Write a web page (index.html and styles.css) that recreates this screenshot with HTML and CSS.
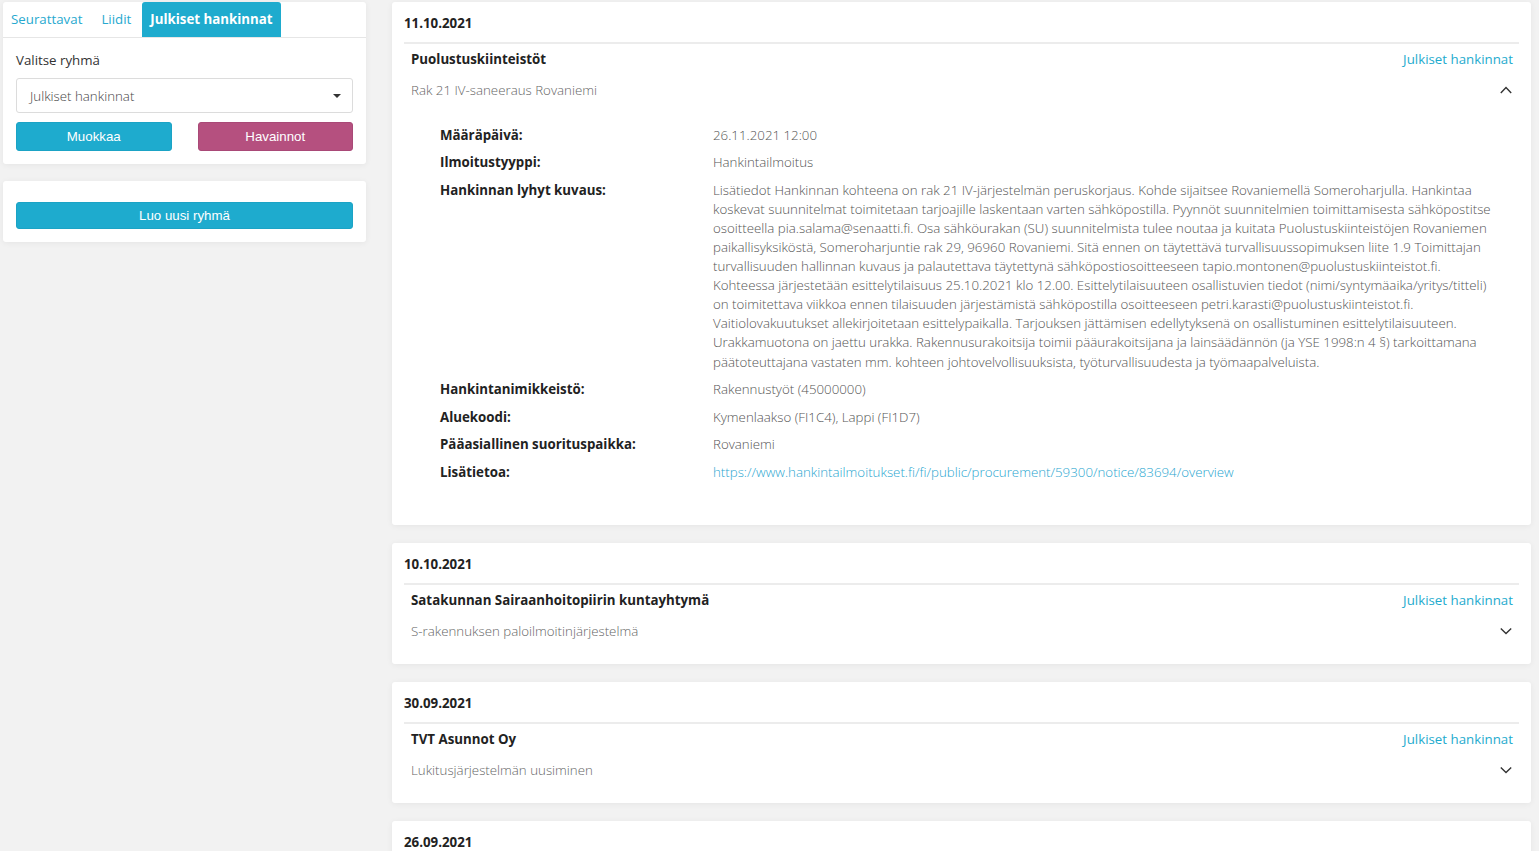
FILE: index.html
```html
<!DOCTYPE html>
<html lang="fi">
  <head>
    <meta charset="UTF-8" />
    <meta name="viewport" content="width=device-width, initial-scale=1.0" />
    <title>Julkiset hankinnat</title>
    <link rel="stylesheet" href="styles.css">
  </head>

  <body>
    <div class="page">
      <aside class="sidebar">
        <div class="side-card">
          <ul class="tabs">
            <li class="tab">Seurattavat</li>
            <li class="tab">Liidit</li>
            <li class="tab active">Julkiset hankinnat</li>
          </ul>
          <div class="side-body">
            <label class="field-label">Valitse ryhmä</label>
            <div class="select">
              <span>Julkiset hankinnat</span>
              <span class="caret"></span>
            </div>
            <div class="btn-row">
              <button class="btn btn-blue">Muokkaa</button>
              <button class="btn btn-pink">Havainnot</button>
            </div>
          </div>
        </div>

        <div class="side-card side-card-new">
          <button class="btn btn-blue btn-wide">Luo uusi ryhmä</button>
        </div>
      </aside>

      <main class="feed">
        <section class="entry-card">
          <div class="entry-date">11.10.2021</div>
          <div class="entry-head">
            <span class="entry-name">Puolustuskiinteistöt</span>
            <a class="entry-group" href="#">Julkiset hankinnat</a>
          </div>
          <div class="entry-sub">
            <span>Rak 21 IV-saneeraus Rovaniemi</span>
            <svg class="chevron" width="12" height="8" viewBox="0 0 12 8"><polyline points="0.8,7 6,1.6 11.2,7" /></svg>
          </div>
          <dl class="details">
            <dt>Määräpäivä:</dt>
            <dd>26.11.2021 12:00</dd>
            <dt>Ilmoitustyyppi:</dt>
            <dd>Hankintailmoitus</dd>
            <dt>Hankinnan lyhyt kuvaus:</dt>
            <dd>Lisätiedot Hankinnan kohteena on rak 21 IV-järjestelmän peruskorjaus. Kohde sijaitsee Rovaniemellä Someroharjulla. Hankintaa koskevat suunnitelmat toimitetaan tarjoajille laskentaan varten sähköpostilla. Pyynnöt suunnitelmien toimittamisesta sähköpostitse osoitteella pia.salama@senaatti.fi. Osa sähköurakan (SU) suunnitelmista tulee noutaa ja kuitata Puolustuskiinteistöjen Rovaniemen paikallisyksiköstä, Someroharjuntie rak 29, 96960 Rovaniemi. Sitä ennen on täytettävä turvallisuussopimuksen liite 1.9 Toimittajan turvallisuuden hallinnan kuvaus ja palautettava täytettynä sähköpostiosoitteeseen tapio.montonen@puolustuskiinteistot.fi. Kohteessa järjestetään esittelytilaisuus 25.10.2021 klo 12.00. Esittelytilaisuuteen osallistuvien tiedot (nimi/syntymäaika/yritys/titteli) on toimitettava viikkoa ennen tilaisuuden järjestämistä sähköpostilla osoitteeseen petri.karasti@puolustuskiinteistot.fi. Vaitiolovakuutukset allekirjoitetaan esittelypaikalla. Tarjouksen jättämisen edellytyksenä on osallistuminen esittelytilaisuuteen. Urakkamuotona on jaettu urakka. Rakennusurakoitsija toimii pääurakoitsijana ja lainsäädännön (ja YSE 1998:n 4 §) tarkoittamana päätoteuttajana vastaten mm. kohteen johtovelvollisuuksista, työturvallisuudesta ja työmaapalveluista.</dd>
            <dt>Hankintanimikkeistö:</dt>
            <dd>Rakennustyöt (45000000)</dd>
            <dt>Aluekoodi:</dt>
            <dd>Kymenlaakso (FI1C4), Lappi (FI1D7)</dd>
            <dt>Pääasiallinen suorituspaikka:</dt>
            <dd>Rovaniemi</dd>
            <dt>Lisätietoa:</dt>
            <dd><a href="#">https://www.hankintailmoitukset.fi/fi/public/procurement/59300/notice/83694/overview</a></dd>
          </dl>
        </section>

        <section class="entry-card">
          <div class="entry-date">10.10.2021</div>
          <div class="entry-head">
            <span class="entry-name">Satakunnan Sairaanhoitopiirin kuntayhtymä</span>
            <a class="entry-group" href="#">Julkiset hankinnat</a>
          </div>
          <div class="entry-sub">
            <span>S-rakennuksen paloilmoitinjärjestelmä</span>
            <svg class="chevron" width="12" height="8" viewBox="0 0 12 8"><polyline points="0.8,1.6 6,6.6 11.2,1.6" /></svg>
          </div>
        </section>

        <section class="entry-card">
          <div class="entry-date">30.09.2021</div>
          <div class="entry-head">
            <span class="entry-name">TVT Asunnot Oy</span>
            <a class="entry-group" href="#">Julkiset hankinnat</a>
          </div>
          <div class="entry-sub">
            <span>Lukitusjärjestelmän uusiminen</span>
            <svg class="chevron" width="12" height="8" viewBox="0 0 12 8"><polyline points="0.8,1.6 6,6.6 11.2,1.6" /></svg>
          </div>
        </section>

        <section class="entry-card">
          <div class="entry-date">26.09.2021</div>
        </section>
      </main>
    </div>
  </body>
</html>
```

FILE: styles.css
```css
body {
  margin: 0;
  padding: 0;
  font-family: "Open Sans", sans-serif;
  font-size: 13.3px;
  background-color: #f2f2f2;
  color: #333;
  height: 851px;
  overflow: hidden;
}

.page {
  display: grid;
  grid-template-columns: 363px 1fr;
  column-gap: 26px;
  padding: 2px 8px 0 3px;
  align-items: start;
}

/* left column */

.side-card {
  background-color: #fff;
  border-radius: 3px;
  box-shadow: 0 1px 6px rgba(0, 0, 0, 0.06);
  margin-bottom: 17px;
}

.tabs {
  display: flex;
  list-style: none;
  margin: 0;
  padding: 0;
  border-bottom: 1px solid #e6e6e6;
}

.tab {
  padding: 0 8px;
  margin-right: 3px;
  height: 35px;
  line-height: 35px;
  color: #27a9cf;
}

.tab.active {
  background-color: #1eabce;
  color: #fff;
  font-weight: 700;
  border-radius: 3px 3px 0 0;
}

.side-body {
  padding: 12px 13px 13px;
}

.field-label {
  display: block;
  line-height: 20px;
  color: #333;
}

.select {
  display: flex;
  justify-content: space-between;
  align-items: center;
  height: 33px;
  margin-top: 8px;
  padding: 0 11px 0 13px;
  border: 1px solid #dcdcdc;
  border-radius: 3px;
  font-weight: 300;
  color: #444;
}

.caret {
  width: 0;
  height: 0;
  border-left: 4px solid transparent;
  border-right: 4px solid transparent;
  border-top: 4px solid #333;
}

.btn-row {
  display: grid;
  grid-template-columns: 1fr 1fr;
  column-gap: 26px;
  margin-top: 9px;
}

.btn {
  height: 29px;
  border: 1px solid transparent;
  border-radius: 3px;
  font-family: "Liberation Sans", Arial, sans-serif;
  font-size: 13.3px;
  color: #fff;
  cursor: pointer;
}

.btn-blue {
  background-color: #1eabce;
  border-color: #1ba3c5;
}

.btn-pink {
  background-color: #b5507f;
  border-color: #a94977;
}

.side-card-new {
  padding: 21px 13px 13px;
}

.btn-wide {
  display: block;
  width: 100%;
  height: 27px;
}

/* right column */

.entry-card {
  background-color: #fff;
  border-radius: 3px;
  box-shadow: 0 1px 6px rgba(0, 0, 0, 0.06);
  padding: 0 12px 23px;
  margin-bottom: 18px;
}

.entry-date {
  padding: 12px 0 10px;
  line-height: 18px;
  font-weight: 700;
  color: #222;
  border-bottom: 2px solid #ececec;
}

.entry-head {
  display: flex;
  justify-content: space-between;
  padding: 5px 6px 0 7px;
  line-height: 20px;
}

.entry-name {
  font-weight: 700;
  color: #222;
}

.entry-group {
  color: #1eabce;
  text-decoration: none;
}

.entry-sub {
  display: flex;
  justify-content: space-between;
  align-items: center;
  margin-top: 11px;
  padding: 0 7px;
  line-height: 20px;
  font-weight: 300;
  color: #666;
}

.chevron {
  fill: none;
  stroke: #333;
  stroke-width: 1.4;
}

.details {
  display: grid;
  grid-template-columns: 273px 1fr;
  row-gap: 8.5px;
  margin: 25.5px 0 19.5px;
  padding: 0 18px 0 36px;
  line-height: 19.1px;
}

.details dt {
  font-weight: 700;
  color: #222;
}

.details dd {
  margin: 0;
  font-weight: 300;
  color: #555;
}

.details a {
  color: #2aa6d0;
  text-decoration: none;
}
```
